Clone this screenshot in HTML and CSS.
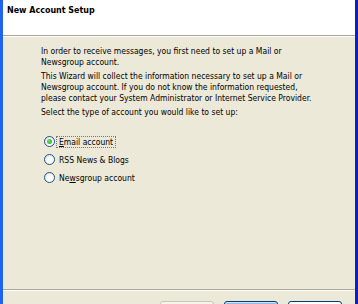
FILE: index.html
```html
<!DOCTYPE html>
<html>
<head>
<meta charset="utf-8">
<link rel="stylesheet" href="styles.css">
</head>
<body>
<div class="window">
  <div class="header">
    <div class="title">New Account Setup</div>
  </div>
  <div class="content">
    <p>In order to receive messages, you first need to set up a Mail or<br>Newsgroup account.</p>
    <p>This Wizard will collect the information necessary to set up a Mail or<br>Newsgroup account. If you do not know the information requested,<br>please contact your System Administrator or Internet Service Provider.</p>
    <p>Select the type of account you would like to set up:</p>
    <div class="options">
      <div class="option">
        <span class="radio checked"></span>
        <span class="label focus"><u>E</u>mail account</span>
      </div>
      <div class="option">
        <span class="radio"></span>
        <span class="label">RSS News &amp; Blogs</span>
      </div>
      <div class="option">
        <span class="radio"></span>
        <span class="label">Ne<u>w</u>sgroup account</span>
      </div>
    </div>
  </div>
  <div class="footer">
    <button class="btn disabled">&lt; Back</button>
    <button class="btn default">Next &gt;</button>
    <button class="btn">Cancel</button>
  </div>
</div>
</body>
</html>
```

FILE: styles.css
```css
html, body {
  margin: 0;
  padding: 0;
  width: 358px;
  height: 304px;
  overflow: hidden;
  background: #ECE9D8;
}
.window {
  box-sizing: border-box;
  width: 358px;
  height: 330px;
  border-left: 3px solid #1F63EE;
  border-right: 3px solid #0A1FC8;
  display: flex;
  flex-direction: column;
  font-family: "DejaVu Sans", "Liberation Sans", sans-serif;
  font-stretch: condensed;
  font-size: 8.5px;
  color: #000;
}
.header {
  background: #fff;
  border-bottom: 1px solid #ACA899;
  box-shadow: 0 1px 0 #fff;
  padding: 4px 0 0 4px;
  height: 31px;
  flex: none;
}
.title {
  font-weight: bold;
  font-size: 8.9px;
  line-height: 12px;
}
.content {
  flex: 1;
  padding: 10px 0 0 38px;
}
.content p {
  margin: 0 0 3px 0;
  line-height: 11px;
}
.options {
  margin-top: 17px;
  margin-left: 3px;
  display: flex;
  flex-direction: column;
  gap: 5px;
}
.option {
  display: flex;
  align-items: center;
  height: 13px;
}
.radio {
  box-sizing: border-box;
  width: 11px;
  height: 11px;
  border-radius: 50%;
  border: 1px solid #1C5180;
  background: radial-gradient(circle at 65% 65%, #fff 30%, #DCDAD0 100%);
  position: relative;
  flex: none;
}
.radio.checked::after {
  content: "";
  position: absolute;
  left: 2px;
  top: 2px;
  width: 5px;
  height: 5px;
  border-radius: 50%;
  background: radial-gradient(circle at 40% 40%, #6CE06C, #21A121);
}
.label {
  margin-left: 1px;
  padding: 0 2px;
  line-height: 10px;
  border: 1px solid transparent;
}
.label.focus {
  border: 1px dotted #777;
}
.footer {
  flex: none;
  height: 41px;
  border-top: 1px solid #ACA899;
  box-shadow: inset 0 1px 0 #fff;
  display: flex;
  justify-content: flex-end;
  align-items: flex-start;
  padding: 11px 13px 0 0;
  box-sizing: border-box;
}
.btn {
  width: 54px;
  height: 23px;
  border-radius: 3px;
  border: 1px solid #003C74;
  background: linear-gradient(#fff, #ECEBE6);
  font-family: "DejaVu Sans", "Liberation Sans", sans-serif;
  font-stretch: condensed;
  font-size: 8.5px;
  margin-left: 10px;
  padding: 0;
}
.btn.disabled {
  border-color: #C9C7BA;
  color: #ACA899;
  background: #F5F4EA;
}
.btn.default {
  box-shadow: inset 0 0 0 1px #CEE7FF, inset 0 0 0 2px #98B8EA;
}
```
